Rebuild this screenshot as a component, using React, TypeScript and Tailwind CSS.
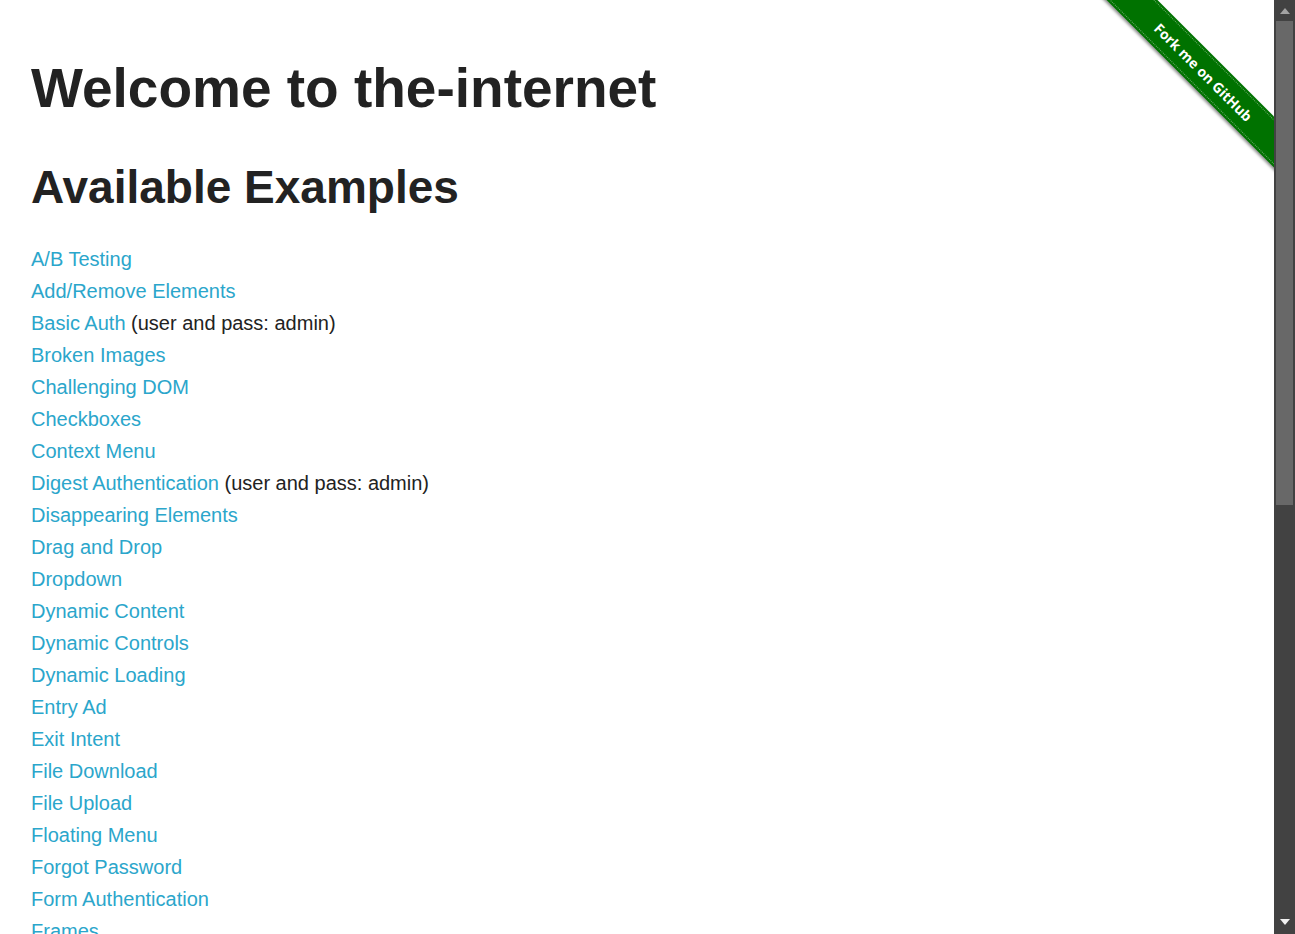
import React from "react";

const links: { label: string; note?: string }[] = [
  { label: "A/B Testing" },
  { label: "Add/Remove Elements" },
  { label: "Basic Auth", note: "(user and pass: admin)" },
  { label: "Broken Images" },
  { label: "Challenging DOM" },
  { label: "Checkboxes" },
  { label: "Context Menu" },
  { label: "Digest Authentication", note: "(user and pass: admin)" },
  { label: "Disappearing Elements" },
  { label: "Drag and Drop" },
  { label: "Dropdown" },
  { label: "Dynamic Content" },
  { label: "Dynamic Controls" },
  { label: "Dynamic Loading" },
  { label: "Entry Ad" },
  { label: "Exit Intent" },
  { label: "File Download" },
  { label: "File Upload" },
  { label: "Floating Menu" },
  { label: "Forgot Password" },
  { label: "Form Authentication" },
  { label: "Frames" },
  { label: "Geolocation" },
];

function Ribbon() {
  return (
    <div className="absolute right-0 top-0 h-[186px] w-[186px] overflow-hidden pointer-events-none">
      <div className="absolute left-[-15px] top-[53px] flex h-[36px] w-[260px] rotate-45 flex-col justify-center bg-[#007200] shadow-[0_2px_3px_rgba(0,0,0,0.45)]">
        <div className="absolute left-0 right-0 top-[2px] border-t border-dotted border-white/40" />
        <div className="absolute left-0 right-0 bottom-[2px] border-t border-dotted border-white/40" />
        <span
          className="pl-[2px] pt-[1px] text-center text-[14px] font-bold leading-none text-white"
          style={{ fontFamily: '"Open Sans", "DejaVu Sans", sans-serif' }}
        >
          Fork me on GitHub
        </span>
      </div>
    </div>
  );
}

function Scrollbar() {
  return (
    <div className="flex h-full w-[21px] shrink-0 flex-col items-center bg-[#424242]">
      <div className="flex h-[21px] w-full items-center justify-center">
        <svg width="10" height="6" viewBox="0 0 10 6">
          <polygon points="5,0 10,6 0,6" fill="#a3a3a3" />
        </svg>
      </div>
      <div className="h-[484px] w-[17px] bg-[#686868]" />
      <div className="flex-1" />
      <div className="flex h-[21px] w-full items-center justify-center pb-[3px]">
        <svg width="10" height="6" viewBox="0 0 10 6">
          <polygon points="0,0 10,0 5,6" fill="#f2f2f2" />
        </svg>
      </div>
    </div>
  );
}

export default function App() {
  return (
    <div
      className="flex h-[934px] w-full overflow-hidden bg-white text-[#222222]"
      style={{ fontFamily: '"Liberation Sans", Arial, sans-serif' }}
    >
      <div className="relative flex-1 overflow-hidden">
        <div className="pl-[31px] pt-[58px]">
          <h1 className="text-[55px] font-bold leading-[61px]">Welcome to the-internet</h1>
          <h2 className="mt-[42px] text-[46px] font-bold leading-[52px]">Available Examples</h2>
          <ul className="mt-[30px] text-[20px] leading-[32px]">
            {links.map((l) => (
              <li key={l.label}>
                <a href="#" className="text-[#2ba6cb]">
                  {l.label}
                </a>
                {l.note ? <span> {l.note}</span> : null}
              </li>
            ))}
          </ul>
        </div>
        <Ribbon />
      </div>
      <Scrollbar />
    </div>
  );
}
